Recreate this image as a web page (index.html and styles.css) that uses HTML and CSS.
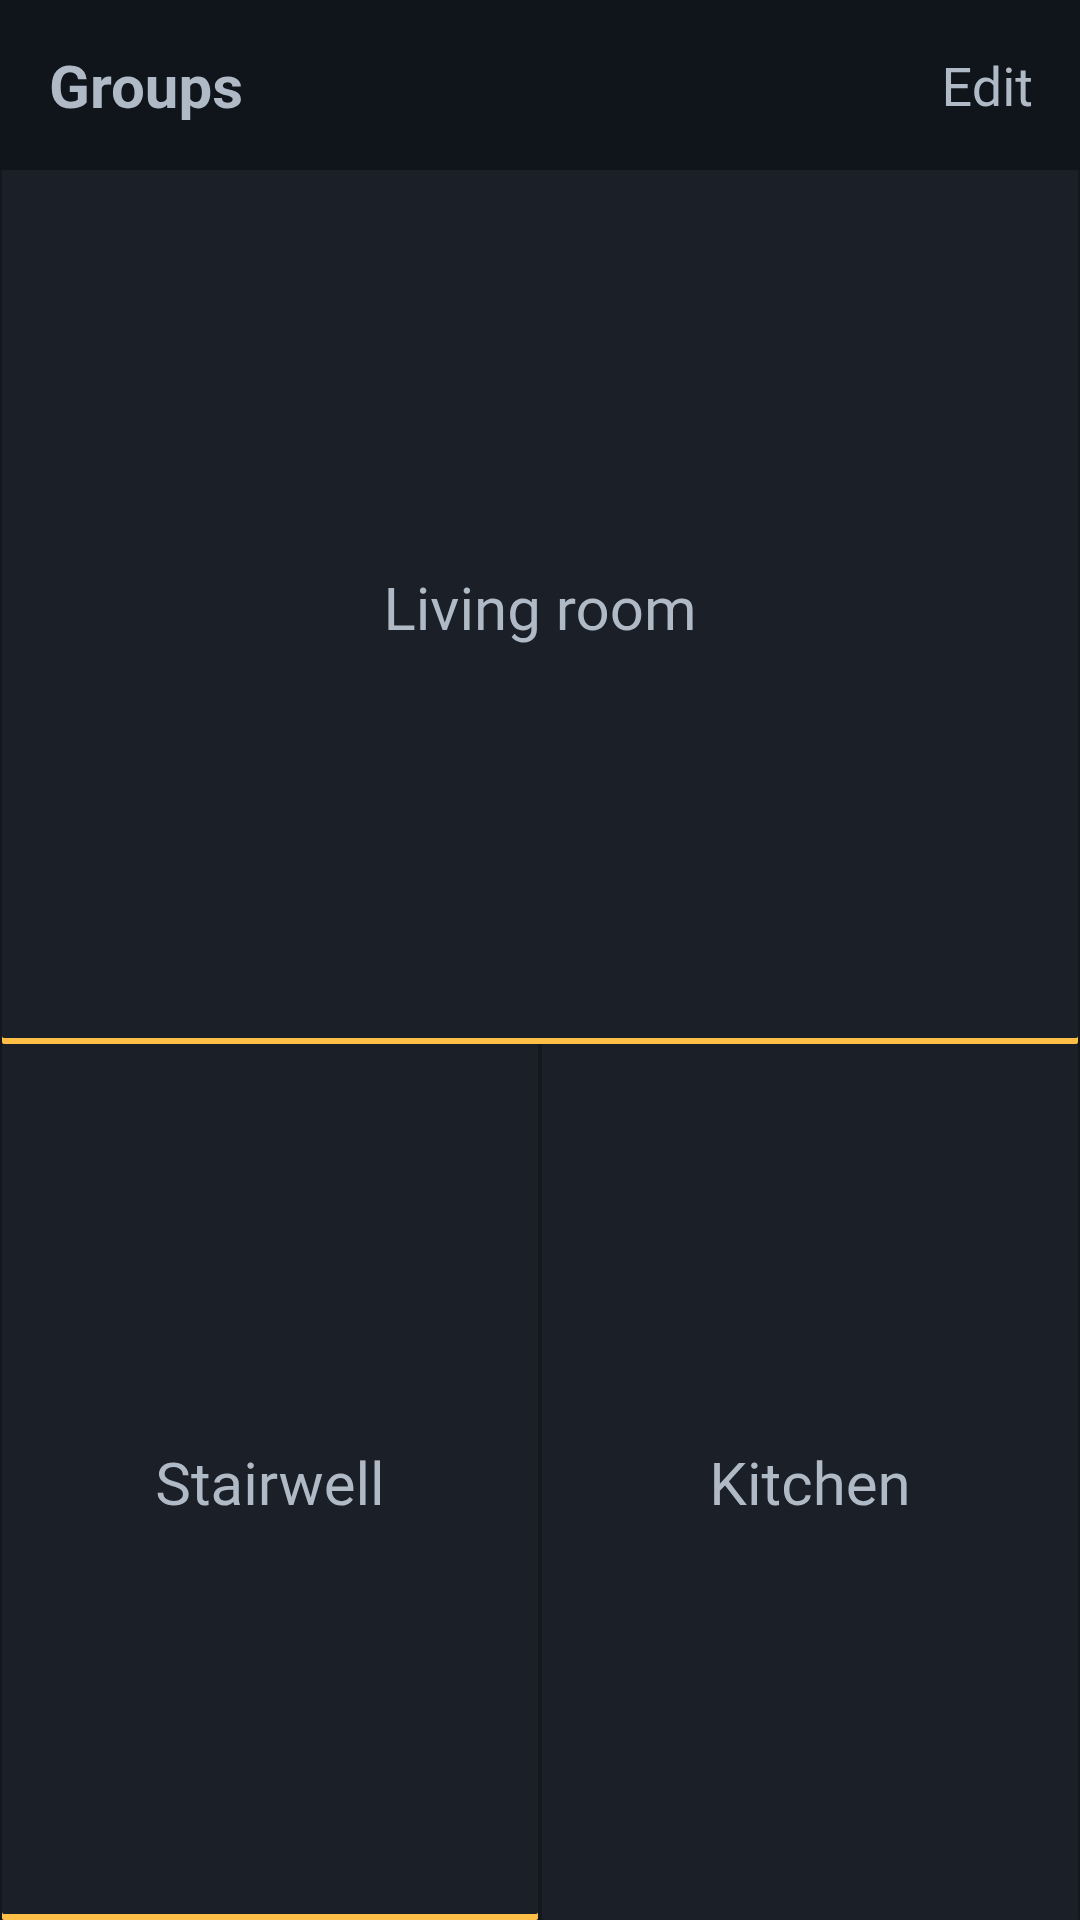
FILE: index.html
```html
<!DOCTYPE html>
<html>
<head>
<meta charset="utf-8">
<link rel="stylesheet" href="styles.css">
</head>
<body>
<header class="topbar">
  <h1 class="title">Groups</h1>
  <span class="edit">Edit</span>
</header>
<main class="grid">
  <div class="tile tile-wide tile-active">Living room</div>
  <div class="tile tile-active">Stairwell</div>
  <div class="tile">Kitchen</div>
</main>
</body>
</html>
```
FILE: styles.css
```css
html, body {
  margin: 0;
  padding: 0;
}
body {
  width: 1080px;
  height: 1920px;
  overflow: hidden;
  background: #14171e;
  font-family: Roboto, "Noto Sans", sans-serif;
  color: #b0bac6;
}
.topbar {
  height: 170px;
  background: #10141b;
  display: flex;
  align-items: center;
  justify-content: space-between;
  padding: 6px 47px 0 49px;
  box-sizing: border-box;
}
.title {
  margin: 0;
  font-size: 60px;
  font-weight: 700;
  line-height: 1;
}
.edit {
  font-size: 54px;
  font-weight: 400;
  line-height: 1;
}
.grid {
  display: grid;
  grid-template-columns: 1fr 1fr;
  grid-template-rows: 874px 876px;
  column-gap: 4px;
  padding: 0 2px;
}
.tile {
  background: #1b2028;
  display: flex;
  align-items: center;
  justify-content: center;
  font-size: 60px;
  border-radius: 2px;
  box-sizing: border-box;
  padding-top: 4px;
}
.tile-wide {
  grid-column: 1 / span 2;
}
.tile-active {
  box-shadow: inset 0 -6px 0 #ffbf47;
}
```
